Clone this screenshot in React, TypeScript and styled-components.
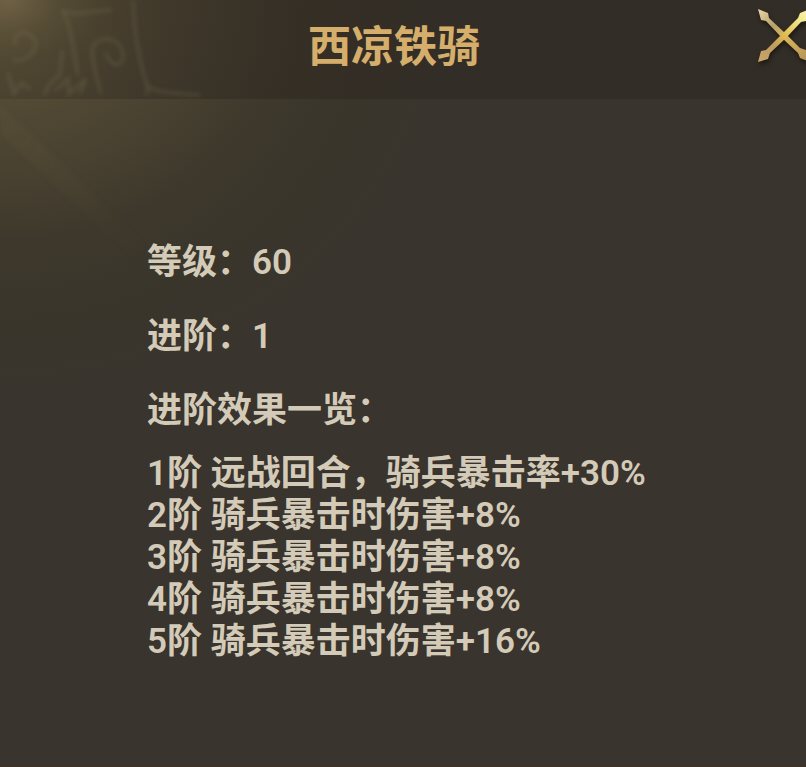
import React from "react";
import styled, { createGlobalStyle } from "styled-components";

const GlobalStyle = createGlobalStyle`
  body {
    margin: 0;
    background: #39342d;
  }
`;

const Panel = styled.main`
  box-sizing: border-box;
  display: flex;
  flex-direction: column;
  min-height: 100vh;
  overflow: hidden;
  color: #d3cab8;
  font-family: Roboto, "Noto Sans CJK SC", sans-serif;
  border-bottom: 2px solid #3e3329;
  background:
    radial-gradient(ellipse 90px 60px at 10px 0, rgba(170, 148, 108, 0.4) 0%, rgba(140, 126, 84, 0.15) 55%, transparent 100%),
    radial-gradient(ellipse 300px 240px at 0 0, rgba(140, 126, 80, 0.34) 0%, rgba(112, 102, 62, 0.16) 50%, transparent 100%),
    radial-gradient(ellipse 460px 400px at 0 0, rgba(104, 92, 56, 0.5) 0%, rgba(94, 82, 54, 0.4) 35%, rgba(74, 66, 42, 0.3) 60%, rgba(62, 58, 36, 0.2) 80%, transparent 100%),
    #39342d;
`;

const Header = styled.header`
  position: relative;
  display: flex;
  align-items: center;
  height: 99px;
  padding-left: 30px;
  background: linear-gradient(90deg, rgba(40, 33, 28, 0.2), rgba(40, 33, 28, 0.38) 200px);
`;

const Ornament = styled.svg`
  position: absolute;
  left: 0;
  top: 0;
  pointer-events: none;
  filter: blur(2px);
`;

const Title = styled.h1`
  flex: 1;
  margin: 0;
  padding-bottom: 6px;
  text-align: center;
  font-size: 43px;
  line-height: 64px;
  font-weight: 700;
  color: #d6ae6c;
`;

const CloseButton = styled.button`
  display: flex;
  align-self: flex-start;
  width: 48px;
  height: 72px;
  padding: 0;
  border: 0;
  background: none;
  cursor: pointer;
  overflow: visible;

  svg {
    flex: none;
    filter: drop-shadow(1px 3px 2px rgba(20, 16, 12, 0.7));
  }
`;

const Body = styled.section`
  padding: 127px 24px 100px 147px;
  font-size: 35px;
  font-weight: 600;
`;

const Stats = styled.dl`
  margin: 0;
`;

const Stat = styled.div`
  display: flex;
  line-height: 74px;
`;

const Term = styled.dt``;

const Value = styled.dd`
  margin: 0;
`;

const Subtitle = styled.h2`
  margin: 0;
  font: inherit;
  line-height: 74px;
`;

const Effects = styled.ul`
  margin: 5px 0 0;
  padding: 0;
  list-style: none;
  line-height: 42px;
`;

const stats = [
  { label: "等级：", value: "60" },
  { label: "进阶：", value: "1" },
];

const effects = [
  "1阶 远战回合，骑兵暴击率+30%",
  "2阶 骑兵暴击时伤害+8%",
  "3阶 骑兵暴击时伤害+8%",
  "4阶 骑兵暴击时伤害+8%",
  "5阶 骑兵暴击时伤害+16%",
];

function CrossedArrows() {
  return (
    <svg width="54" height="72" viewBox="0 0 54 72" aria-hidden="true">
      <defs>
        <linearGradient id="falling" gradientUnits="userSpaceOnUse" x1="0" y1="10" x2="52" y2="62">
          <stop offset="0" stopColor="#e6d6a4" />
          <stop offset="0.3" stopColor="#b89f6c" />
          <stop offset="0.5" stopColor="#dbb955" />
          <stop offset="1" stopColor="#b08f5c" />
        </linearGradient>
        <linearGradient id="rising" gradientUnits="userSpaceOnUse" x1="0" y1="62" x2="52" y2="10">
          <stop offset="0" stopColor="#c9a66c" />
          <stop offset="0.3" stopColor="#bd9a5f" />
          <stop offset="0.52" stopColor="#dfbd50" />
          <stop offset="0.8" stopColor="#f2e88c" />
          <stop offset="1" stopColor="#fdf5b4" />
        </linearGradient>
      </defs>
      <path fill="url(#falling)" d="M0 9 L10 13 L11 18 L28 34 L42 48 L48 50 L52 62 L42 58 L40 53 L24 38 L8 21 L3 20 Z" />
      <path fill="url(#rising)" d="M0 62 L3 51 L8 50 L24 34 L40 18 L42 13 L52 9 L48 21 L43 22 L28 38 L12 53 L10 59 Z" />
    </svg>
  );
}

export default function App() {
  return (
    <>
      <GlobalStyle />
      <Panel>
        <Header>
          <Ornament width="220" height="400" viewBox="0 0 220 400" fill="none" stroke="#8a8060" strokeOpacity="0.26" strokeWidth="3" aria-hidden="true">
            <defs>
              <linearGradient id="ray" gradientUnits="userSpaceOnUse" x1="0" y1="105" x2="150" y2="255">
                <stop offset="0" stopColor="#7d7048" stopOpacity="0.11" />
                <stop offset="1" stopColor="#7d7048" stopOpacity="0" />
              </linearGradient>
            </defs>
            <path d="M-8 97 L190 285 L160 285 L-8 126 Z" fill="url(#ray)" stroke="none" />
            <path d="M133 0 C134 30 138 58 147 85 C151 92 170 93 200 95 M147 85 V95" />
            <path d="M101 94 C96 76 92 61 92 51 C93 37 112 35 120 46 C127 57 121 69 113 63 C108 60 106 55 106 52" />
            <path d="M62 10 C73 29 72 46 78 75 M62 10 C80 18 96 9 112 10" />
            <path d="M12 60 C31 63 42 45 32 36 C21 27 9 39 17 45" />
            <path d="M8 73 L14 94 L21 83 L31 89 M44 95 L50 83 L60 75 L62 50 M55 91 L68 79 L69 94 L86 79 L80 94" />
          </Ornament>
          <Title>西凉铁骑</Title>
          <CloseButton type="button" aria-label="关闭">
            <CrossedArrows />
          </CloseButton>
        </Header>
        <Body>
          <Stats>
            {stats.map((s) => (
              <Stat key={s.label}>
                <Term>{s.label}</Term>
                <Value>{s.value}</Value>
              </Stat>
            ))}
          </Stats>
          <Subtitle>进阶效果一览：</Subtitle>
          <Effects>
            {effects.map((e) => (
              <li key={e}>{e}</li>
            ))}
          </Effects>
        </Body>
      </Panel>
    </>
  );
}
